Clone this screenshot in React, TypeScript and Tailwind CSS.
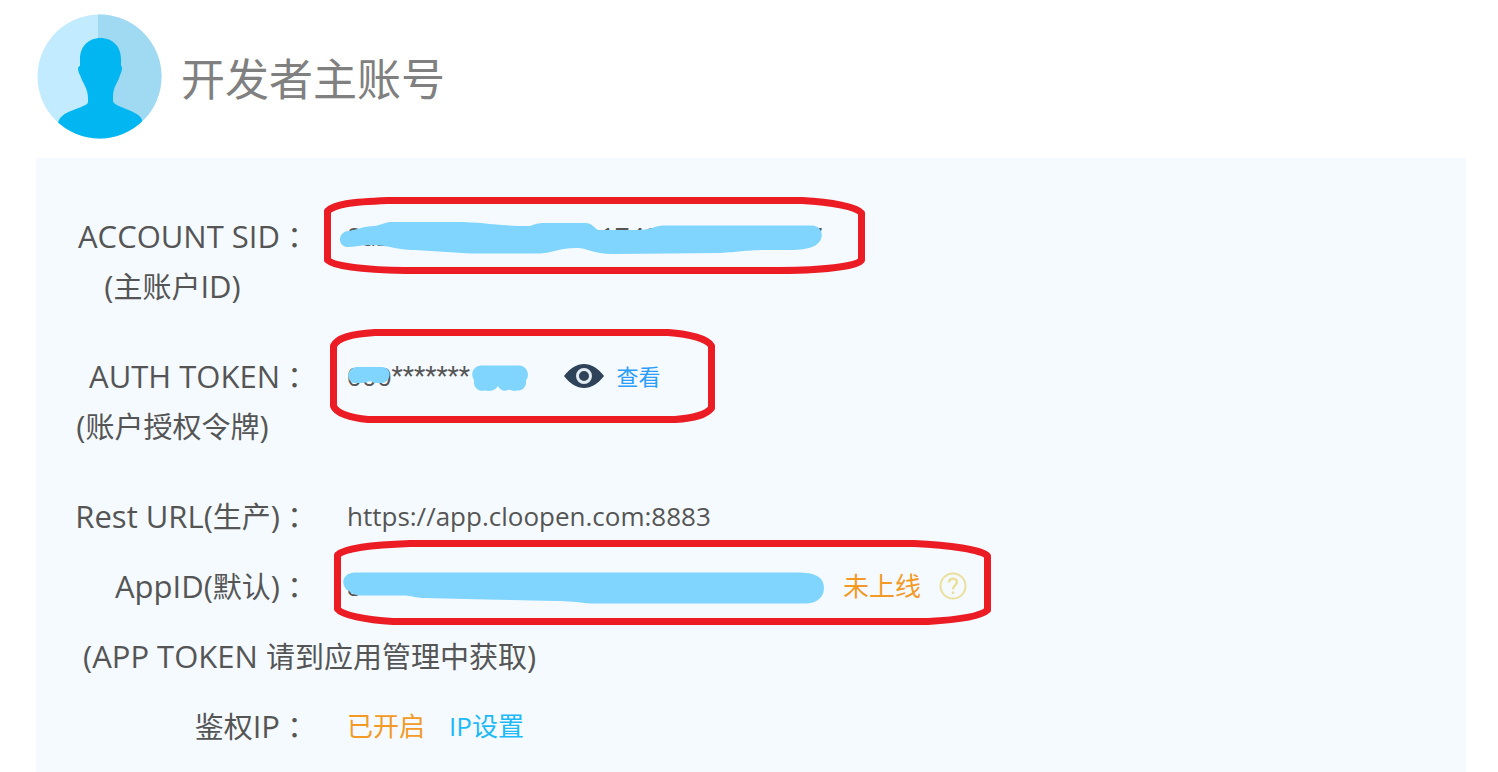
import type { ReactNode } from "react"

const Avatar = () => {
	return (
		<svg className="size-[126px] shrink-0" viewBox="0 0 126 126" aria-hidden="true">
			<defs>
				<clipPath id="avatar-clip">
					<circle cx="63.500" cy="63.500" r="62" />
				</clipPath>
			</defs>
			<g clipPath="url(#avatar-clip)">
				<rect width="126" height="126" fill="#c2ebff" />
				<rect x="62" width="64" height="126" fill="#a0d9f2" />
				<path
					d="M64.500 25C77 25 85 34 85 46V53C87 53 86 59 84 62C83 68 77 73 77 84V88C77 92 89 95 97 99C103 102 107 105 106 110V126H22V110C25 99 37 98 47 93C53 91 52 89 52 85C52 75 46 69 44 62C42 59 41 53 44 53V46C44 34 52 25 64.500 25Z"
					fill="#02b7f1"
				/>
			</g>
		</svg>
	)
}

const EyeIcon = () => {
	return (
		<svg className="h-[24px] w-[40px] shrink-0" viewBox="0 0 40 24" aria-hidden="true">
			<path d="M0 12C6 4 13 0 20 0S34 4 40 12C34 20 27 24 20 24S6 20 0 12Z" fill="#2f4358" />
			<circle cx="20" cy="12" r="6.500" fill="none" stroke="#e3ebf2" strokeWidth="3" />
		</svg>
	)
}

const HelpIcon = () => {
	return (
		<svg className="size-[28px]" viewBox="0 0 28 28" fill="none" stroke="#eadf9c" aria-hidden="true">
			<circle cx="14" cy="14" r="12.500" strokeWidth="2" />
			<path d="M10 10.500C10 5.500 18 5.500 18 10C18 13 14 13.500 14 17.500" strokeWidth="2.500" />
			<path d="M14 19.500V22" strokeWidth="2.500" />
		</svg>
	)
}

// hand drawn red frame + blue marker over a value
const Marker = ({
	className,
	viewBox,
	frame,
	children
}: {
	className: string
	viewBox: string
	frame: string
	children: ReactNode
}) => {
	return (
		<svg className={`pointer-events-none absolute ${className}`} viewBox={viewBox} aria-hidden="true">
			<g fill="#80d5ff">{children}</g>
			<path d={frame} fill="none" stroke="#ec1c24" strokeWidth="7" strokeLinejoin="round" />
		</svg>
	)
}

// latin letters run a little larger than the chinese ones in the labels
const Zh = ({ children }: { children: string }) => {
	return <span className="text-[29px]">{children}</span>
}

const Row = ({
	label,
	note,
	children
}: {
	label: ReactNode
	note?: ReactNode
	children: ReactNode
}) => {
	return (
		<div className="flex gap-[38px]">
			<dt className="w-[273px] shrink-0 text-[31px] leading-[50px]">
				<div className="flex h-[50px] justify-end whitespace-nowrap">
					<span>{label}</span>
					<span className="font-['Noto_Sans_CJK_TC',sans-serif] text-[29px]">：</span>
				</div>
				{note && <div className="h-[50px] text-center">{note}</div>}
			</dt>
			<dd className="relative flex h-[50px] items-center whitespace-nowrap text-[26px] leading-[50px]">
				{children}
			</dd>
		</div>
	)
}

export default function App() {
	return (
		<main className="bg-white pr-8 pb-0.5 pl-9 font-['Open_Sans','Noto_Sans_CJK_SC',sans-serif] text-[#555]">
			<header className="flex items-center gap-[19px] pt-[13px] pb-[19px]">
				<Avatar />
				<h1 className="pt-1.5 text-[44px] leading-[60px] text-[#808080]">开发者主账号</h1>
			</header>

			<section className="bg-[#f4faff] pt-[53px] pb-[21px]">
				<dl className="flex flex-col gap-5">
					<div className="mb-5">
						<Row
							label="ACCOUNT SID"
							note={
								<>
									(<Zh>主账户</Zh>ID)
								</>
							}
						>
							<span className="w-[253px]">8a2</span>
							<span className="w-[208px]">1749</span>
							<span>7</span>
							<Marker
								className="-top-[21px] -left-[27px] h-[90px] w-[550px]"
								viewBox="320 190 550 90"
								frame="M388 200.500H802C832 202 857 207 861.500 213V260C857 267 820 270 780 270.500H405C370 270 335 267 327.500 260V211C335 204 350 202 388 200.500Z"
							>
								<path d="M348 231C358 230 362 226 375 226C384 224 386 222 392 222H455C485 222 495 226 530 226C538 223 540 223 545 223H585C594 223 595 231 600 230H640C655 229 652 226 665 225.500H812C824 226 826 242 812 247C800 251 790 250 770 250C745 250 740 252 720 253L615 254C590 254 590 248 576 248C560 248 552 253 540 253.500H470L415 250C395 250 390 245 370 245C362 245 355 247 347 247C337 246 338 232 348 231Z" />
							</Marker>
						</Row>
					</div>

					<div className="mb-5">
						<Row
							label="AUTH TOKEN"
							note={
								<>
									(<Zh>账户授权令牌</Zh>)
								</>
							}
						>
							<span>000</span>
							<span className="w-[82px] font-['Roboto',sans-serif]">*******</span>
							<span className="w-[90px]">8</span>
							<button type="button" className="flex items-center gap-[13px] text-[22px] text-[#2b9dfb]">
								<EyeIcon />
								查看
							</button>
							<Marker
								className="-top-[27px] -left-[22px] h-[104px] w-[395px]"
								viewBox="325 324 395 104"
								frame="M375 332.500H668C690 334 708 339 711.500 346V408C706 415 695 418 675 419.500H368C350 418 336 413 333.500 406V346C337 338 350 334 375 332.500Z"
							>
								<path d="M356 367H382C392 367 392 382 382 383H374C370 379 366 383 362 383H354C346 381 346 369 356 367Z" />
								<path d="M481 365.500H519C528 366 530 376 526 380C527 388 521 391 517 390.500C513 392 510 389 508 390C504 392 500 390 498 386C494 392 488 391 485 390.500C479 392 473 388 474 380C470 374 473 366 481 365.500Z" />
							</Marker>
						</Row>
					</div>

					<Row
						label={
							<>
								Rest URL(<Zh>生产</Zh>)
							</>
						}
					>
						https://app.cloopen.com:8883
					</Row>

					<Row
						label={
							<>
								AppID(<Zh>默认</Zh>)
							</>
						}
					>
						<span className="w-[496px]">8</span>
						<span className="mr-[18px] text-[#f39a26]">未上线</span>
						<button type="button" aria-label="帮助">
							<HelpIcon />
						</button>
						<Marker
							className="-top-[25px] -left-[17px] h-[94px] w-[665px]"
							viewBox="330 536 665 94"
							frame="M410 543.500H914C950 545 982 550 987.500 556V610C980 617 955 620 928 621.500H393C365 620 342 615 337.500 609V555C345 548 370 545 410 543.500Z"
						>
							<path d="M355 572.500H800C818 573 824 579 824 588C824 597 817 603 807 603.500H590C575 602 570 601 555 601L510 600L465 599L425 598C415 598 412 595.500 403 595.500H360C352 595 350 591 347 590C340 583 343 573 355 572.500Z" />
						</Marker>
					</Row>

					<div className="h-[50px] pl-[47px] text-[31px] leading-[50px]">
						(APP TOKEN <Zh>请到应用管理中获取</Zh>)
					</div>

					<Row
						label={
							<>
								<Zh>鉴权</Zh>IP
							</>
						}
					>
						<span className="mr-6 text-[#f39a26]">已开启</span>
						<a href="#ip" className="text-[#1eb9f8]">
							IP设置
						</a>
					</Row>
				</dl>
			</section>
		</main>
	)
}
